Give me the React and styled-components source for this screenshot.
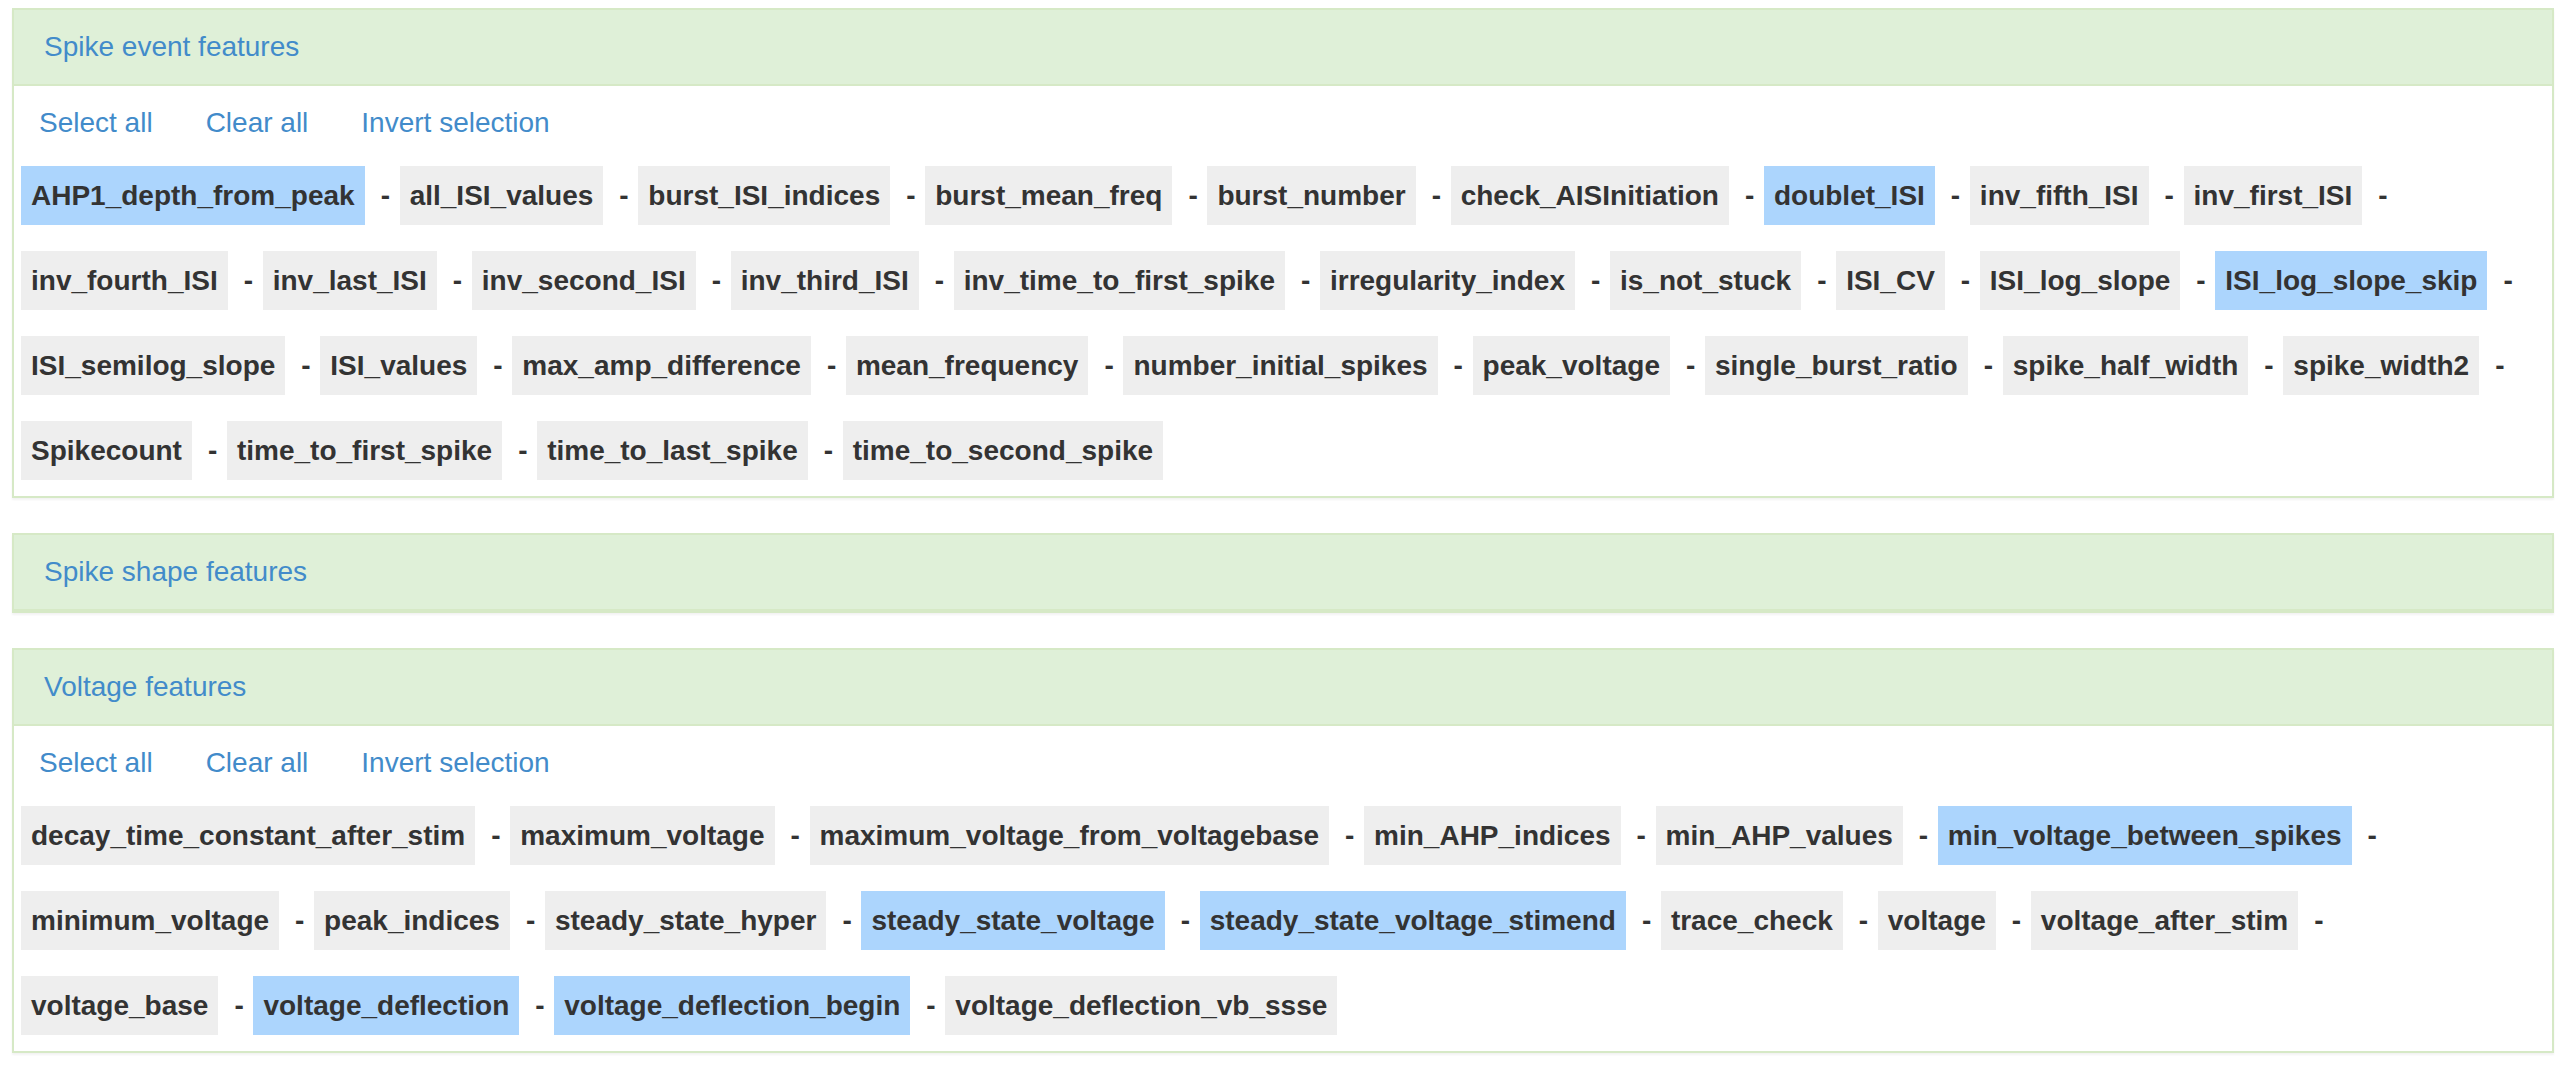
import React from "react";
import styled, { createGlobalStyle } from "styled-components";

const Global = createGlobalStyle`
  html, body { margin: 0; padding: 0; background: #fff; }
  body { font-family: "Liberation Sans", Arial, Helvetica, sans-serif; color: #333; }
`;

const Page = styled.div`
  padding: 8px 16px 0 12px;
`;

const Panel = styled.section`
  border: 2px solid #d6e9c6;
  background: #fff;
  margin-bottom: 35px;
  box-shadow: 0 2px 2px rgba(0, 0, 0, 0.05);
`;

const Heading = styled.div`
  background: #dff0d8;
  border-bottom: 2px solid #d6e9c6;
  padding: 20px 30px;
  line-height: 34px;
  font-size: 28px;
`;

const Title = styled.a`
  color: #428bca;
  text-decoration: none;
  cursor: pointer;
`;

const Body = styled.div`
  padding: 17px 17px 16px 7px;
`;

const LinkRow = styled.div`
  display: flex;
  gap: 53px;
  margin-left: 18px;
  height: 40px;
  line-height: 40px;
  font-size: 28px;
  margin-bottom: 23px;
`;

const ActionLink = styled.a`
  color: #428bca;
  text-decoration: none;
  cursor: pointer;
`;

const ChipList = styled.div`
  display: flex;
  flex-wrap: wrap;
  row-gap: 26px;
`;

const Item = styled.div`
  display: flex;
  align-items: center;
`;

const Chip = styled.span`
  display: inline-block;
  height: 59px;
  line-height: 59px;
  padding: 0 10px;
  font-size: 28px;
  font-weight: bold;
  color: #333;
  white-space: nowrap;
  background: ${(p) => (p.$selected ? "#acd5fd" : "#eeeeee")};
`;

const Sep = styled.span`
  display: inline-block;
  box-sizing: border-box;
  width: 35px;
  padding-left: 16px;
  font-size: 28px;
  font-weight: bold;
  color: #333;
`;

const spikeEvent = [
  ["AHP1_depth_from_peak", true],
  ["all_ISI_values"],
  ["burst_ISI_indices"],
  ["burst_mean_freq"],
  ["burst_number"],
  ["check_AISInitiation"],
  ["doublet_ISI", true],
  ["inv_fifth_ISI"],
  ["inv_first_ISI"],
  ["inv_fourth_ISI"],
  ["inv_last_ISI"],
  ["inv_second_ISI"],
  ["inv_third_ISI"],
  ["inv_time_to_first_spike"],
  ["irregularity_index"],
  ["is_not_stuck"],
  ["ISI_CV"],
  ["ISI_log_slope"],
  ["ISI_log_slope_skip", true],
  ["ISI_semilog_slope"],
  ["ISI_values"],
  ["max_amp_difference"],
  ["mean_frequency"],
  ["number_initial_spikes"],
  ["peak_voltage"],
  ["single_burst_ratio"],
  ["spike_half_width"],
  ["spike_width2"],
  ["Spikecount"],
  ["time_to_first_spike"],
  ["time_to_last_spike"],
  ["time_to_second_spike"],
];

const voltage = [
  ["decay_time_constant_after_stim"],
  ["maximum_voltage"],
  ["maximum_voltage_from_voltagebase"],
  ["min_AHP_indices"],
  ["min_AHP_values"],
  ["min_voltage_between_spikes", true],
  ["minimum_voltage"],
  ["peak_indices"],
  ["steady_state_hyper"],
  ["steady_state_voltage", true],
  ["steady_state_voltage_stimend", true],
  ["trace_check"],
  ["voltage"],
  ["voltage_after_stim"],
  ["voltage_base"],
  ["voltage_deflection", true],
  ["voltage_deflection_begin", true],
  ["voltage_deflection_vb_ssse"],
];

function FeaturePanel({ title, items }) {
  return (
    <Panel>
      <Heading>
        <Title>{title}</Title>
      </Heading>
      {items && (
        <Body>
          <LinkRow>
            <ActionLink>Select all</ActionLink>
            <ActionLink>Clear all</ActionLink>
            <ActionLink>Invert selection</ActionLink>
          </LinkRow>
          <ChipList>
            {items.map(([name, sel], i) => (
              <Item key={name}>
                <Chip $selected={!!sel}>{name}</Chip>
                {i < items.length - 1 && <Sep>-</Sep>}
              </Item>
            ))}
          </ChipList>
        </Body>
      )}
    </Panel>
  );
}

export default function App() {
  return (
    <>
      <Global />
      <Page>
        <FeaturePanel title="Spike event features" items={spikeEvent} />
        <FeaturePanel title="Spike shape features" />
        <FeaturePanel title="Voltage features" items={voltage} />
      </Page>
    </>
  );
}
